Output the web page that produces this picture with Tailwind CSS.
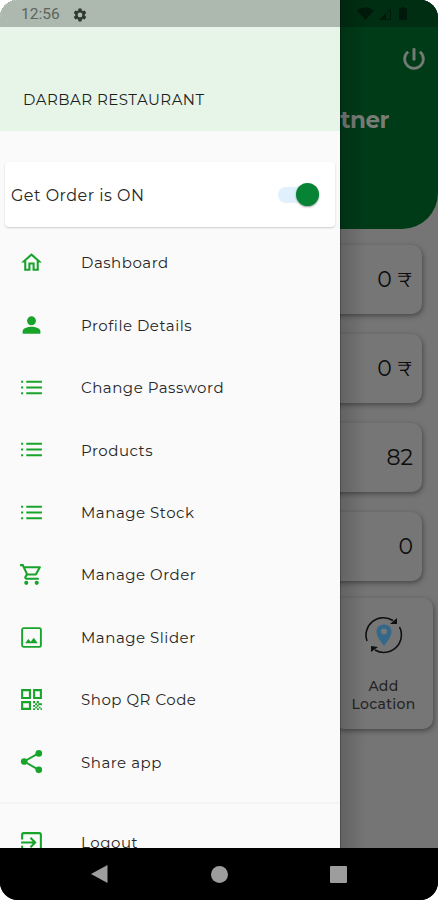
<!DOCTYPE html>
<html lang="en">
<head>
<meta charset="utf-8">
<title>Darbar Restaurant</title>
<script src="https://cdn.jsdelivr.net/npm/@tailwindcss/browser@4"></script>
</head>
<body class="bg-white">
<div class="relative flex h-[900px] w-[438px] flex-col overflow-hidden rounded-[18px] bg-black font-['Montserrat','Inter',sans-serif]">
  <!-- Dimmed partner home page -->
  <main class="h-[848px] overflow-hidden bg-[#757575] text-[#0c0c0c]">
    <header class="h-[229px] rounded-br-[36px] bg-[#003b18]">
      <div class="flex h-[27px] items-center justify-end gap-[5px] bg-[#002e12] pr-[31px] text-[#00190a]">
        <svg class="h-[13px] w-[17px]" viewBox="0 0 17 13" fill="currentColor"><path d="M0 3.5Q8.500-3 17 3.500L8.500 13Z"/></svg>
        <svg class="h-[12px] w-[12px]" viewBox="0 0 12 12"><path d="M1 11.500L11.500 1V11.500Z" fill="none" stroke="currentColor"/><path d="M1 11.500L7 5.500V11.500Z" fill="currentColor"/></svg>
        <svg class="ml-[3px] h-[13px] w-[8px]" viewBox="0 0 8 13" fill="currentColor"><path d="M2.500 0h3v1.300H8V13H0V1.300h2.500z"/></svg>
      </div>
      <div class="flex justify-end pt-[18px] pr-[10px]">
        <svg class="h-[28px] w-[28px]" viewBox="0 0 24 24" fill="#747c75" stroke="#747c75" stroke-width="0.500"><path d="M13 3h-2v10h2V3zm4.830 2.170l-1.420 1.420A6.920 6.920 0 0 1 19 12c0 3.870-3.130 7-7 7s-7-3.130-7-7c0-2.190 1.010-4.140 2.580-5.420L6.170 5.170A8.930 8.930 0 0 0 3 12a9 9 0 0 0 18 0c0-2.740-1.230-5.180-3.170-6.830z"/></svg>
      </div>
      <h1 class="mt-[31px] pr-[49px] text-right text-[23px] leading-[32px] font-bold tracking-[-0.500px] text-[#777c77]">Partner</h1>
    </header>
    <section class="mt-[16px] mr-[16px] flex flex-col gap-[20px] text-right text-[22px] leading-[69px]">
      <div class="h-[69px] rounded-[10px] bg-[#767676] pr-[10px] shadow-[1px_2px_5px_#484848]">0 <span class="text-[20px]">₹</span></div>
      <div class="h-[69px] rounded-[10px] bg-[#767676] pr-[10px] shadow-[1px_2px_5px_#484848]">0 <span class="text-[20px]">₹</span></div>
      <div class="h-[69px] rounded-[10px] bg-[#767676] pr-[9px] shadow-[1px_2px_5px_#484848]">82</div>
      <div class="h-[69px] rounded-[10px] bg-[#767676] pr-[9px] shadow-[1px_2px_5px_#484848]">0</div>
    </section>
    <section class="mt-[17px] mr-[5px] ml-[334px] flex h-[131px] flex-col items-center rounded-[10px] bg-[#767676] pt-[18px] shadow-[1px_2px_5px_#484848]">
      <svg class="h-[38px] w-[38px]" viewBox="0 0 38 38"><g fill="none" stroke="#101010" stroke-width="1.600"><path d="M2 25A17.500 17.500 0 0 1 28 4.500"/><path d="M34.500 11A17.500 17.500 0 0 1 10 34"/></g><path d="M32 2v6h-7zM6 36v-6l7 1z" fill="#101010"/><path d="M19 8.500c-4.500 0-7.500 3.200-7.500 7.300C11.500 21 19 30 19 30s7.500-9 7.500-14.200c0-4.100-3-7.300-7.500-7.300z" fill="#346889"/><circle cx="19" cy="15.500" r="3" fill="#777"/></svg>
      <p class="mt-[24px] text-center text-[14px] leading-[17.500px] font-medium tracking-[0.300px] text-[#242424]">Add<br>Location</p>
    </section>
  </main>

  <!-- Navigation drawer -->
  <aside class="absolute top-0 left-0 h-[848px] w-[340px] overflow-hidden bg-[#fafafa] text-[#262626]">
    <div class="h-[131px] bg-[#e7f5e9]">
      <div class="flex h-[27px] items-center bg-[#adb8af] pt-[3px] pl-[21px] font-['Roboto',sans-serif] text-[15.500px] text-[#5c645e]">12:56
        <svg class="ml-[12px] h-[16px] w-[16px]" viewBox="0 0 24 24" fill="#2f3831"><path d="M19.140 12.940c.04-.3.060-.61.060-.94s-.02-.64-.07-.94l2.030-1.580a.49.49 0 0 0 .12-.61l-1.920-3.320a.49.49 0 0 0-.59-.22l-2.390.96a7 7 0 0 0-1.620-.94l-.36-2.540a.48.48 0 0 0-.48-.41h-3.840a.47.47 0 0 0-.47.41l-.36 2.540c-.59.24-1.130.57-1.620.94l-2.390-.96a.48.48 0 0 0-.59.22L2.740 8.870a.47.47 0 0 0 .12.610l2.030 1.580a6 6 0 0 0 0 1.880l-2.030 1.580a.49.49 0 0 0-.12.610l1.920 3.320c.12.220.37.290.59.220l2.390-.96c.5.380 1.030.7 1.620.94l.36 2.540c.05.240.24.410.48.410h3.840c.24 0 .44-.17.47-.41l.36-2.540a7 7 0 0 0 1.620-.94l2.390.96c.22.080.47 0 .59-.22l1.920-3.320a.47.47 0 0 0-.12-.61zM12 15.600a3.600 3.600 0 1 1 0-7.200 3.600 3.600 0 0 1 0 7.200z"/></svg>
      </div>
      <p class="pt-[63px] pl-[23px] text-[15px] leading-[20px] tracking-[0.480px] text-[#1c1f1d]">DARBAR RESTAURANT</p>
    </div>
    <div class="mt-[31px] mr-[5px] ml-[5px] flex h-[65px] items-center justify-between rounded-[4px] bg-white pr-[16px] pl-[6px] shadow-[0_1px_2px_#ccc]">
      <span class="pt-[2px] text-[16px] tracking-[0.480px]">Get Order is ON</span>
      <div class="flex h-[16px] w-[41px] items-center justify-end rounded-full bg-[#e0f0fc]"><div class="h-[23px] w-[23px] shrink-0 rounded-full bg-[#068335] shadow-[0_1px_2px_#999]"></div></div>
    </div>
    <nav class="mt-[4.500px] text-[15px] tracking-[0.520px]">
      <a class="flex h-[62.400px] items-center gap-[37px] pl-[19px]"><svg class="h-[25px] w-[25px]" viewBox="0 0 24 24" fill="#18a42b"><path d="M12 5.690l5 4.500V18h-2v-6H9v6H7v-7.810l5-4.500M12 3L2 12h3v8h6v-6h2v6h6v-8h3L12 3z"/></svg><span class="pt-[2px]">Dashboard</span></a>
      <a class="flex h-[62.400px] items-center gap-[37px] pl-[19px]"><svg class="h-[25px] w-[25px]" viewBox="0 0 24 24" fill="#18a42b"><circle cx="12" cy="7.500" r="4.300"/><path d="M3.500 20v-2.500C3.500 14.800 8 13.300 12 13.300s8.500 1.500 8.500 4.200V20z"/></svg><span class="pt-[2px]">Profile Details</span></a>
      <a class="flex h-[62.400px] items-center gap-[37px] pl-[19px]"><svg class="h-[25px] w-[25px]" viewBox="0 0 24 24" fill="#18a42b"><path d="M2 5.500h2v2H2zM7 5.500h15v2H7zM2 11h2v2H2zM7 11h15v2H7zM2 16.500h2v2H2zM7 16.500h15v2H7z"/></svg><span class="pt-[2px]">Change Password</span></a>
      <a class="flex h-[62.400px] items-center gap-[37px] pl-[19px]"><svg class="h-[25px] w-[25px]" viewBox="0 0 24 24" fill="#18a42b"><path d="M2 5.500h2v2H2zM7 5.500h15v2H7zM2 11h2v2H2zM7 11h15v2H7zM2 16.500h2v2H2zM7 16.500h15v2H7z"/></svg><span class="pt-[2px]">Products</span></a>
      <a class="flex h-[62.400px] items-center gap-[37px] pl-[19px]"><svg class="h-[25px] w-[25px]" viewBox="0 0 24 24" fill="#18a42b"><path d="M2 5.500h2v2H2zM7 5.500h15v2H7zM2 11h2v2H2zM7 11h15v2H7zM2 16.500h2v2H2zM7 16.500h15v2H7z"/></svg><span class="pt-[2px]">Manage Stock</span></a>
      <a class="flex h-[62.400px] items-center gap-[37px] pl-[19px]"><svg class="h-[25px] w-[25px]" viewBox="0 0 24 24" fill="#18a42b"><path d="M15.550 13c.75 0 1.410-.41 1.750-1.030l3.580-6.490A.996.996 0 0 0 20.010 4H5.210l-.94-2H1v2h2l3.600 7.590-1.350 2.440C4.520 15.370 5.480 17 7 17h12v-2H7l1.100-2h7.450zM6.160 6h12.150l-2.760 5H8.530L6.160 6zM7 18a2 2 0 1 0 0 4 2 2 0 0 0 0-4zm10 0a2 2 0 1 0 0 4 2 2 0 0 0 0-4z"/></svg><span class="pt-[2px]">Manage Order</span></a>
      <a class="flex h-[62.400px] items-center gap-[37px] pl-[19px]"><svg class="h-[25px] w-[25px]" viewBox="0 0 24 24" fill="#18a42b"><rect x="3" y="3" width="18" height="18" rx="1.500" fill="none" stroke="#18a42b" stroke-width="1.800"/><path d="M6 17.500l2.800-4 2.500 2.500 2.900-3.800 3.800 5.300z"/></svg><span class="pt-[2px]">Manage Slider</span></a>
      <a class="flex h-[62.400px] items-center gap-[37px] pl-[19px]"><svg class="h-[25px] w-[25px]" viewBox="0 0 24 24" fill="#18a42b"><path fill-rule="evenodd" d="M2 2h9.500v9.500H2zM4 4v5.500h5.500V4zM13.500 2H22v9.500h-8.500zM15.500 4v5.500H20V4zM2 13.500h9.500V22H2zM4 15.500V20h5.500v-4.500z"/><path d="M13.500 13.500h2v2h-2zM17 13.500h2v2h-2zM15.500 15.500h1.700v1.700h-1.700zM20.500 15.500H22v2h-1.500zM18.500 15.500h2v1.700h-2zM13.500 17.200h2v1.800h-2zM17 17.200h1.800V19H17zM15.500 19h1.700v1.500h-1.700zM19 19h1.700v1.500H19zM13.500 20.500h2V22h-2zM17.200 20.500H19V22h-1.800zM20.700 20.500H22V22h-1.300z"/></svg><span class="pt-[2px]">Shop QR Code</span></a>
      <a class="flex h-[62.400px] items-center gap-[37px] pl-[19px]"><svg class="h-[25px] w-[25px]" viewBox="0 0 24 24" fill="#18a42b"><path d="M19 4L5 12l14 8" fill="none" stroke="#18a42b" stroke-width="1.800"/><circle cx="19" cy="4.200" r="3.200"/><circle cx="5" cy="12" r="3.200"/><circle cx="19" cy="20" r="3.200"/></svg><span class="pt-[2px]">Share app</span></a>
      <div class="mt-[9px] h-[2px] bg-[#f4f4f4]"></div>
      <a class="mt-[7px] flex h-[62.400px] items-center gap-[37px] pl-[19px]"><svg class="h-[25px] w-[25px]" viewBox="0 0 24 24" fill="none" stroke="#18a42b" stroke-width="2"><path d="M3 9V4.500Q3 3 4.500 3H19.500Q21 3 21 4.500V19.500Q21 21 19.500 21H4.500Q3 21 3 19.500V15M2 12H15M11 7.500L15.500 12L11 16.500"/></svg><span class="pt-[2px]">Logout</span></a>
    </nav>
  </aside>
  <div class="absolute top-0 left-[340px] h-[848px] w-[26px] border-l border-black/35 bg-linear-to-r from-black/16 to-transparent"></div>

  <!-- System navigation -->
  <footer class="relative flex h-[52px] items-center bg-black pl-[90px]">
    <svg class="h-[20px] w-[18px]" viewBox="0 0 18 20" fill="#9d9d9d"><path d="M17.500 1v18L1 10z"/></svg>
    <div class="ml-[103px] h-[17px] w-[17px] rounded-full bg-[#9d9d9d]"></div>
    <div class="ml-[102px] h-[17px] w-[17px] rounded-[1px] bg-[#9d9d9d]"></div>
  </footer>
</div>
</body>
</html>
